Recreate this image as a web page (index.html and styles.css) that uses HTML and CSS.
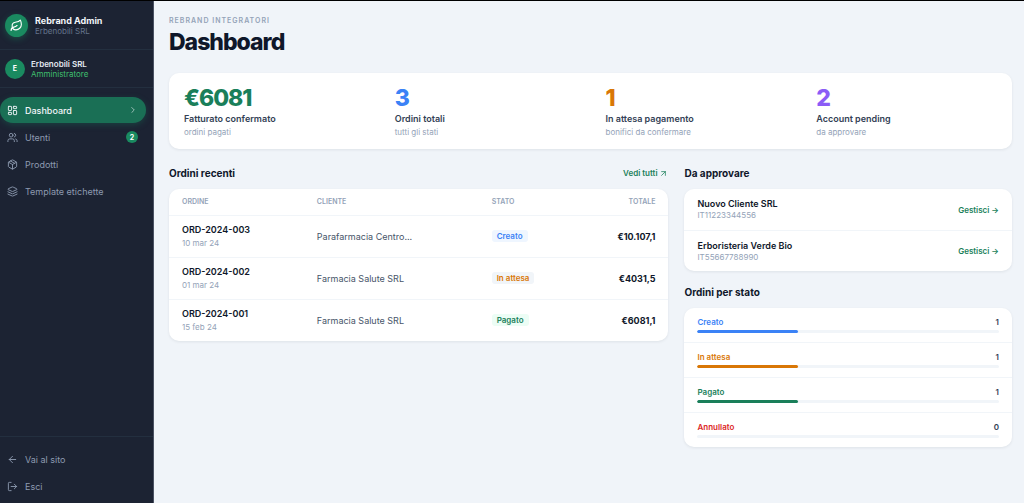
FILE: index.html
```
<!DOCTYPE html>
<html lang="it">
<head>
    <meta charset="UTF-8">
    <meta name="viewport" content="width=device-width, initial-scale=1.0">
    <title>Rebrand Admin - Dashboard</title>
    <link rel="stylesheet" href="styles.css">
</head>
<body>
    <aside class="sidebar">
        <div class="brand">
            <span class="brand-logo">
                <svg class="leaf" viewBox="0 0 24 24"><path d="M11 20A7 7 0 0 1 9.8 6.1C15.5 5 17 4.48 19 2c1 2 2 4.18 2 8 0 5.5-4.78 10-10 10Z"/><path d="M2 21c0-3 1.85-5.36 5.08-6C9.5 14.52 12 13 13 12"/></svg>
            </span>
            <div>
                <p class="brand-name">Rebrand Admin</p>
                <p class="brand-sub">Erbenobili SRL</p>
            </div>
        </div>

        <div class="user">
            <span class="avatar">E</span>
            <div>
                <p class="user-name">Erbenobili SRL</p>
                <p class="user-role">Amministratore</p>
            </div>
        </div>

        <nav class="nav">
            <a href="#" class="nav-item active">
                <svg class="icon" viewBox="0 0 24 24"><rect x="3" y="3" width="7" height="9" rx="1"/><rect x="14" y="3" width="7" height="5" rx="1"/><rect x="14" y="12" width="7" height="9" rx="1"/><rect x="3" y="16" width="7" height="5" rx="1"/></svg>
                <span>Dashboard</span>
                <svg class="chevron" viewBox="0 0 24 24"><path d="m9 18 6-6-6-6"/></svg>
            </a>
            <a href="#" class="nav-item">
                <svg class="icon" viewBox="0 0 24 24"><path d="M16 21v-2a4 4 0 0 0-4-4H6a4 4 0 0 0-4 4v2"/><circle cx="9" cy="7" r="4"/><path d="M22 21v-2a4 4 0 0 0-3-3.87"/><path d="M16 3.13a4 4 0 0 1 0 7.75"/></svg>
                <span>Utenti</span>
                <span class="nav-badge">2</span>
            </a>
            <a href="#" class="nav-item">
                <svg class="icon" viewBox="0 0 24 24"><path d="M21 8a2 2 0 0 0-1-1.73l-7-4a2 2 0 0 0-2 0l-7 4A2 2 0 0 0 3 8v8a2 2 0 0 0 1 1.73l7 4a2 2 0 0 0 2 0l7-4A2 2 0 0 0 21 16Z"/><path d="m3.3 7 8.7 5 8.7-5"/><path d="M12 22V12"/><path d="m7.5 4.27 9 5.15"/></svg>
                <span>Prodotti</span>
            </a>
            <a href="#" class="nav-item">
                <svg class="icon" viewBox="0 0 24 24"><path d="m12.83 2.18a2 2 0 0 0-1.66 0L2.6 6.08a1 1 0 0 0 0 1.83l8.58 3.91a2 2 0 0 0 1.66 0l8.58-3.9a1 1 0 0 0 0-1.83Z"/><path d="m22 12.65-9.17 4.16a2 2 0 0 1-1.66 0L2 12.65"/><path d="m22 17.65-9.17 4.16a2 2 0 0 1-1.66 0L2 17.65"/></svg>
                <span>Template etichette</span>
            </a>
        </nav>

        <div class="nav nav-bottom">
            <a href="#" class="nav-item">
                <svg class="icon" viewBox="0 0 24 24"><path d="m12 19-7-7 7-7"/><path d="M19 12H5"/></svg>
                <span>Vai al sito</span>
            </a>
            <button type="button" class="nav-item">
                <svg class="icon" viewBox="0 0 24 24"><path d="M9 21H5a2 2 0 0 1-2-2V5a2 2 0 0 1 2-2h4"/><path d="m16 17 5-5-5-5"/><path d="M21 12H9"/></svg>
                <span>Esci</span>
            </button>
        </div>
    </aside>

    <main class="main">
        <p class="eyebrow">Rebrand Integratori</p>
        <h1>Dashboard</h1>

        <section class="card stats">
            <div class="stat">
                <p class="stat-value green">€6081</p>
                <p class="stat-label">Fatturato confermato</p>
                <p class="stat-sub">ordini pagati</p>
            </div>
            <div class="stat">
                <p class="stat-value blue">3</p>
                <p class="stat-label">Ordini totali</p>
                <p class="stat-sub">tutti gli stati</p>
            </div>
            <div class="stat">
                <p class="stat-value orange">1</p>
                <p class="stat-label">In attesa pagamento</p>
                <p class="stat-sub">bonifici da confermare</p>
            </div>
            <div class="stat">
                <p class="stat-value purple">2</p>
                <p class="stat-label">Account pending</p>
                <p class="stat-sub">da approvare</p>
            </div>
        </section>

        <div class="columns">
            <section>
                <div class="section-head">
                    <h2>Ordini recenti</h2>
                    <a href="#" class="link">Vedi tutti <svg class="arrow" viewBox="0 0 24 24"><path d="M7 7h10v10"/><path d="M7 17 17 7"/></svg></a>
                </div>
                <div class="card">
                    <table class="orders">
                        <thead>
                            <tr>
                                <th class="col-order">Ordine</th>
                                <th class="col-client">Cliente</th>
                                <th class="col-status">Stato</th>
                                <th class="total">Totale</th>
                            </tr>
                        </thead>
                        <tbody>
                            <tr>
                                <td><p class="order-id">ORD-2024-003</p><p class="order-date">10 mar 24</p></td>
                                <td class="client">Parafarmacia Centro...</td>
                                <td><span class="badge badge-blue">Creato</span></td>
                                <td class="total">€10.107,1</td>
                            </tr>
                            <tr>
                                <td><p class="order-id">ORD-2024-002</p><p class="order-date">01 mar 24</p></td>
                                <td class="client">Farmacia Salute SRL</td>
                                <td><span class="badge badge-orange">In attesa</span></td>
                                <td class="total">€4031,5</td>
                            </tr>
                            <tr>
                                <td><p class="order-id">ORD-2024-001</p><p class="order-date">15 feb 24</p></td>
                                <td class="client">Farmacia Salute SRL</td>
                                <td><span class="badge badge-green">Pagato</span></td>
                                <td class="total">€6081,1</td>
                            </tr>
                        </tbody>
                    </table>
                </div>
            </section>

            <div class="side">
                <section>
                    <div class="section-head">
                        <h2>Da approvare</h2>
                    </div>
                    <div class="card">
                        <div class="approve-row">
                            <div>
                                <p class="approve-name">Nuovo Cliente SRL</p>
                                <p class="approve-vat">IT11223344556</p>
                            </div>
                            <a href="#" class="link">Gestisci →</a>
                        </div>
                        <div class="approve-row">
                            <div>
                                <p class="approve-name">Erboristeria Verde Bio</p>
                                <p class="approve-vat">IT55667788990</p>
                            </div>
                            <a href="#" class="link">Gestisci →</a>
                        </div>
                    </div>
                </section>

                <section>
                    <div class="section-head">
                        <h2>Ordini per stato</h2>
                    </div>
                    <div class="card">
                        <div class="status-row">
                            <div class="status-line"><span class="blue">Creato</span><span>1</span></div>
                            <div class="bar"><div class="bar-fill blue" style="width: 33.3%"></div></div>
                        </div>
                        <div class="status-row">
                            <div class="status-line"><span class="orange">In attesa</span><span>1</span></div>
                            <div class="bar"><div class="bar-fill orange" style="width: 33.3%"></div></div>
                        </div>
                        <div class="status-row">
                            <div class="status-line"><span class="green">Pagato</span><span>1</span></div>
                            <div class="bar"><div class="bar-fill green" style="width: 33.3%"></div></div>
                        </div>
                        <div class="status-row">
                            <div class="status-line"><span class="red">Annullato</span><span>0</span></div>
                            <div class="bar"><div class="bar-fill red" style="width: 0%"></div></div>
                        </div>
                    </div>
                </section>
            </div>
        </div>
    </main>
</body>
</html>
```
FILE: styles.css
```
* {
    box-sizing: border-box;
}

body {
    margin: 0;
    min-height: 100vh;
    display: flex;
    border-top: 1px solid #000;
    background-color: #f0f4f9;
    color: #0f172a;
    font-family: 'Inter', 'Liberation Sans', sans-serif;
    font-size: 9px;
}

p, h1, h2 {
    margin: 0;
}

a {
    text-decoration: none;
}

svg {
    fill: none;
    stroke: currentColor;
    stroke-width: 2;
    stroke-linecap: round;
    stroke-linejoin: round;
    flex-shrink: 0;
}

/* Sidebar */
.sidebar {
    width: 154px;
    flex-shrink: 0;
    display: flex;
    flex-direction: column;
    background-color: #1c2333;
    border-right: 1px solid #4b5263;
}

.brand, .user {
    display: flex;
    align-items: center;
    border-bottom: 1px solid #232f3f;
}

.brand {
    gap: 7px;
    height: 49px;
    padding: 0 5px;
}

.brand-logo, .avatar {
    display: flex;
    align-items: center;
    justify-content: center;
    border-radius: 50%;
    background-color: #1a8a60;
    color: white;
}

.brand-logo {
    width: 23px;
    height: 23px;
    box-shadow: 0 2px 6px rgba(26, 138, 96, 0.4);
}

.leaf {
    width: 13px;
    height: 13px;
}

.brand-name {
    font-size: 9px;
    line-height: 11px;
    font-weight: 700;
    color: #f1f5f9;
}

.brand-sub {
    font-size: 8px;
    line-height: 10px;
    color: #64748b;
}

.user {
    gap: 6px;
    height: 38px;
    padding: 0 5px;
}

.avatar {
    width: 20px;
    height: 20px;
    font-size: 7px;
    font-weight: 700;
}

.user-name {
    font-size: 8px;
    line-height: 10px;
    font-weight: 600;
    color: #e2e8f0;
}

.user-role {
    font-size: 8px;
    line-height: 10px;
    color: #3fbf6e;
}

.nav {
    display: flex;
    flex-direction: column;
    gap: 1px;
    padding: 9px 7px 0 0;
}

.nav-item {
    display: flex;
    align-items: center;
    gap: 7px;
    height: 26px;
    padding: 0 8px 0 7px;
    border: none;
    border-radius: 13px;
    background: none;
    color: #8d9ab0;
    font-family: inherit;
    font-size: 9px;
    text-align: left;
    cursor: pointer;
}

.nav-item.active {
    background-color: #1a6f55;
    color: #f1f5f9;
    font-weight: 500;
    box-shadow: 0 2px 6px rgba(26, 111, 85, 0.4);
}

.icon {
    width: 11px;
    height: 11px;
}

.chevron {
    width: 10px;
    height: 10px;
    margin-left: auto;
    opacity: 0.7;
}

.nav-badge {
    display: flex;
    align-items: center;
    justify-content: center;
    width: 12px;
    height: 12px;
    margin-left: auto;
    border-radius: 50%;
    background-color: #1a8a60;
    color: white;
    font-size: 7px;
    font-weight: 700;
}

.nav-bottom {
    margin-top: auto;
    padding-bottom: 4px;
    border-top: 1px solid #232f3f;
}

/* Main content */
.main {
    flex: 1;
    min-width: 0;
    padding: 15px 12px 15px 15px;
}

.eyebrow {
    font-size: 7px;
    line-height: 10px;
    font-weight: 600;
    letter-spacing: 1px;
    text-transform: uppercase;
    color: #94a3b8;
}

h1 {
    margin: 2px 0 17px;
    font-size: 23px;
    line-height: 28px;
    font-weight: 800;
    letter-spacing: -1px;
}

.card {
    border-radius: 10px;
    background-color: white;
    box-shadow: 0 1px 3px rgba(15, 23, 42, 0.08);
    overflow: hidden;
}

.stats {
    display: grid;
    grid-template-columns: repeat(4, 1fr);
    margin-bottom: 16px;
}

.stat {
    padding: 12px 15px;
}

.stat-value {
    font-size: 23px;
    line-height: 26px;
    font-weight: 800;
    letter-spacing: -1px;
}

.stat-label {
    margin-top: 2px;
    line-height: 12px;
    font-weight: 600;
    color: #334155;
}

.stat-sub {
    margin-top: 2px;
    font-size: 8px;
    line-height: 10px;
    color: #94a3b8;
}

.green { color: #1a7f5a; }
.blue { color: #3b82f6; }
.orange { color: #d97706; }
.purple { color: #8b5cf6; }
.red { color: #dc2626; }

.columns {
    display: grid;
    grid-template-columns: 61fr 40fr;
    gap: 16px;
    align-items: start;
}

.side {
    display: grid;
    gap: 13px;
}

.section-head {
    display: flex;
    align-items: center;
    justify-content: space-between;
    height: 16px;
    margin-bottom: 8px;
}

h2 {
    font-size: 10px;
    font-weight: 700;
}

.link {
    display: flex;
    align-items: center;
    gap: 2px;
    font-size: 8px;
    font-weight: 600;
    color: #1a7f5a;
}

.arrow {
    width: 9px;
    height: 9px;
}

/* Orders table */
.orders {
    width: 100%;
    table-layout: fixed;
    border-collapse: collapse;
}

.orders th {
    height: 26px;
    padding: 0 13px;
    font-size: 7px;
    font-weight: 600;
    text-align: left;
    text-transform: uppercase;
    color: #94a3b8;
}

.orders td {
    height: 42px;
    padding: 0 13px;
    border-top: 1px solid #f1f5f9;
}

.col-order {
    width: 27%;
}

.col-client {
    width: 35%;
}

.col-status {
    width: 17%;
}

.orders .total {
    text-align: right;
}

.orders td.total {
    font-weight: 700;
}

.order-id {
    line-height: 12px;
    font-weight: 600;
}

.order-date {
    margin-top: 2px;
    font-size: 8px;
    line-height: 10px;
    color: #94a3b8;
}

.client {
    color: #475569;
}

.badge {
    display: inline-block;
    padding: 0 5px;
    border-radius: 3px;
    font-size: 8px;
    line-height: 12px;
    font-weight: 600;
}

.badge-blue {
    background-color: #eff6ff;
    color: #3b82f6;
}

.badge-orange {
    background-color: #f1f5f9;
    color: #d97706;
}

.badge-green {
    background-color: #ecfdf5;
    color: #1a7f5a;
}

/* Accounts to approve */
.approve-row {
    display: flex;
    align-items: center;
    justify-content: space-between;
    height: 41px;
    padding: 0 13px;
}

.approve-row + .approve-row,
.status-row + .status-row {
    border-top: 1px solid #f1f5f9;
}

.approve-name {
    line-height: 12px;
    font-weight: 600;
}

.approve-vat {
    font-size: 8px;
    line-height: 11px;
    color: #94a3b8;
}

/* Orders by status */
.status-row {
    padding: 9px 13px;
}

.status-line {
    display: flex;
    justify-content: space-between;
    margin-bottom: 3px;
    font-size: 8px;
    line-height: 10px;
    font-weight: 600;
    color: #334155;
}

.bar {
    height: 3px;
    border-radius: 2px;
    background-color: #f1f5f9;
    overflow: hidden;
}

.bar-fill {
    height: 100%;
    border-radius: 2px;
    background-color: currentColor;
}
```
